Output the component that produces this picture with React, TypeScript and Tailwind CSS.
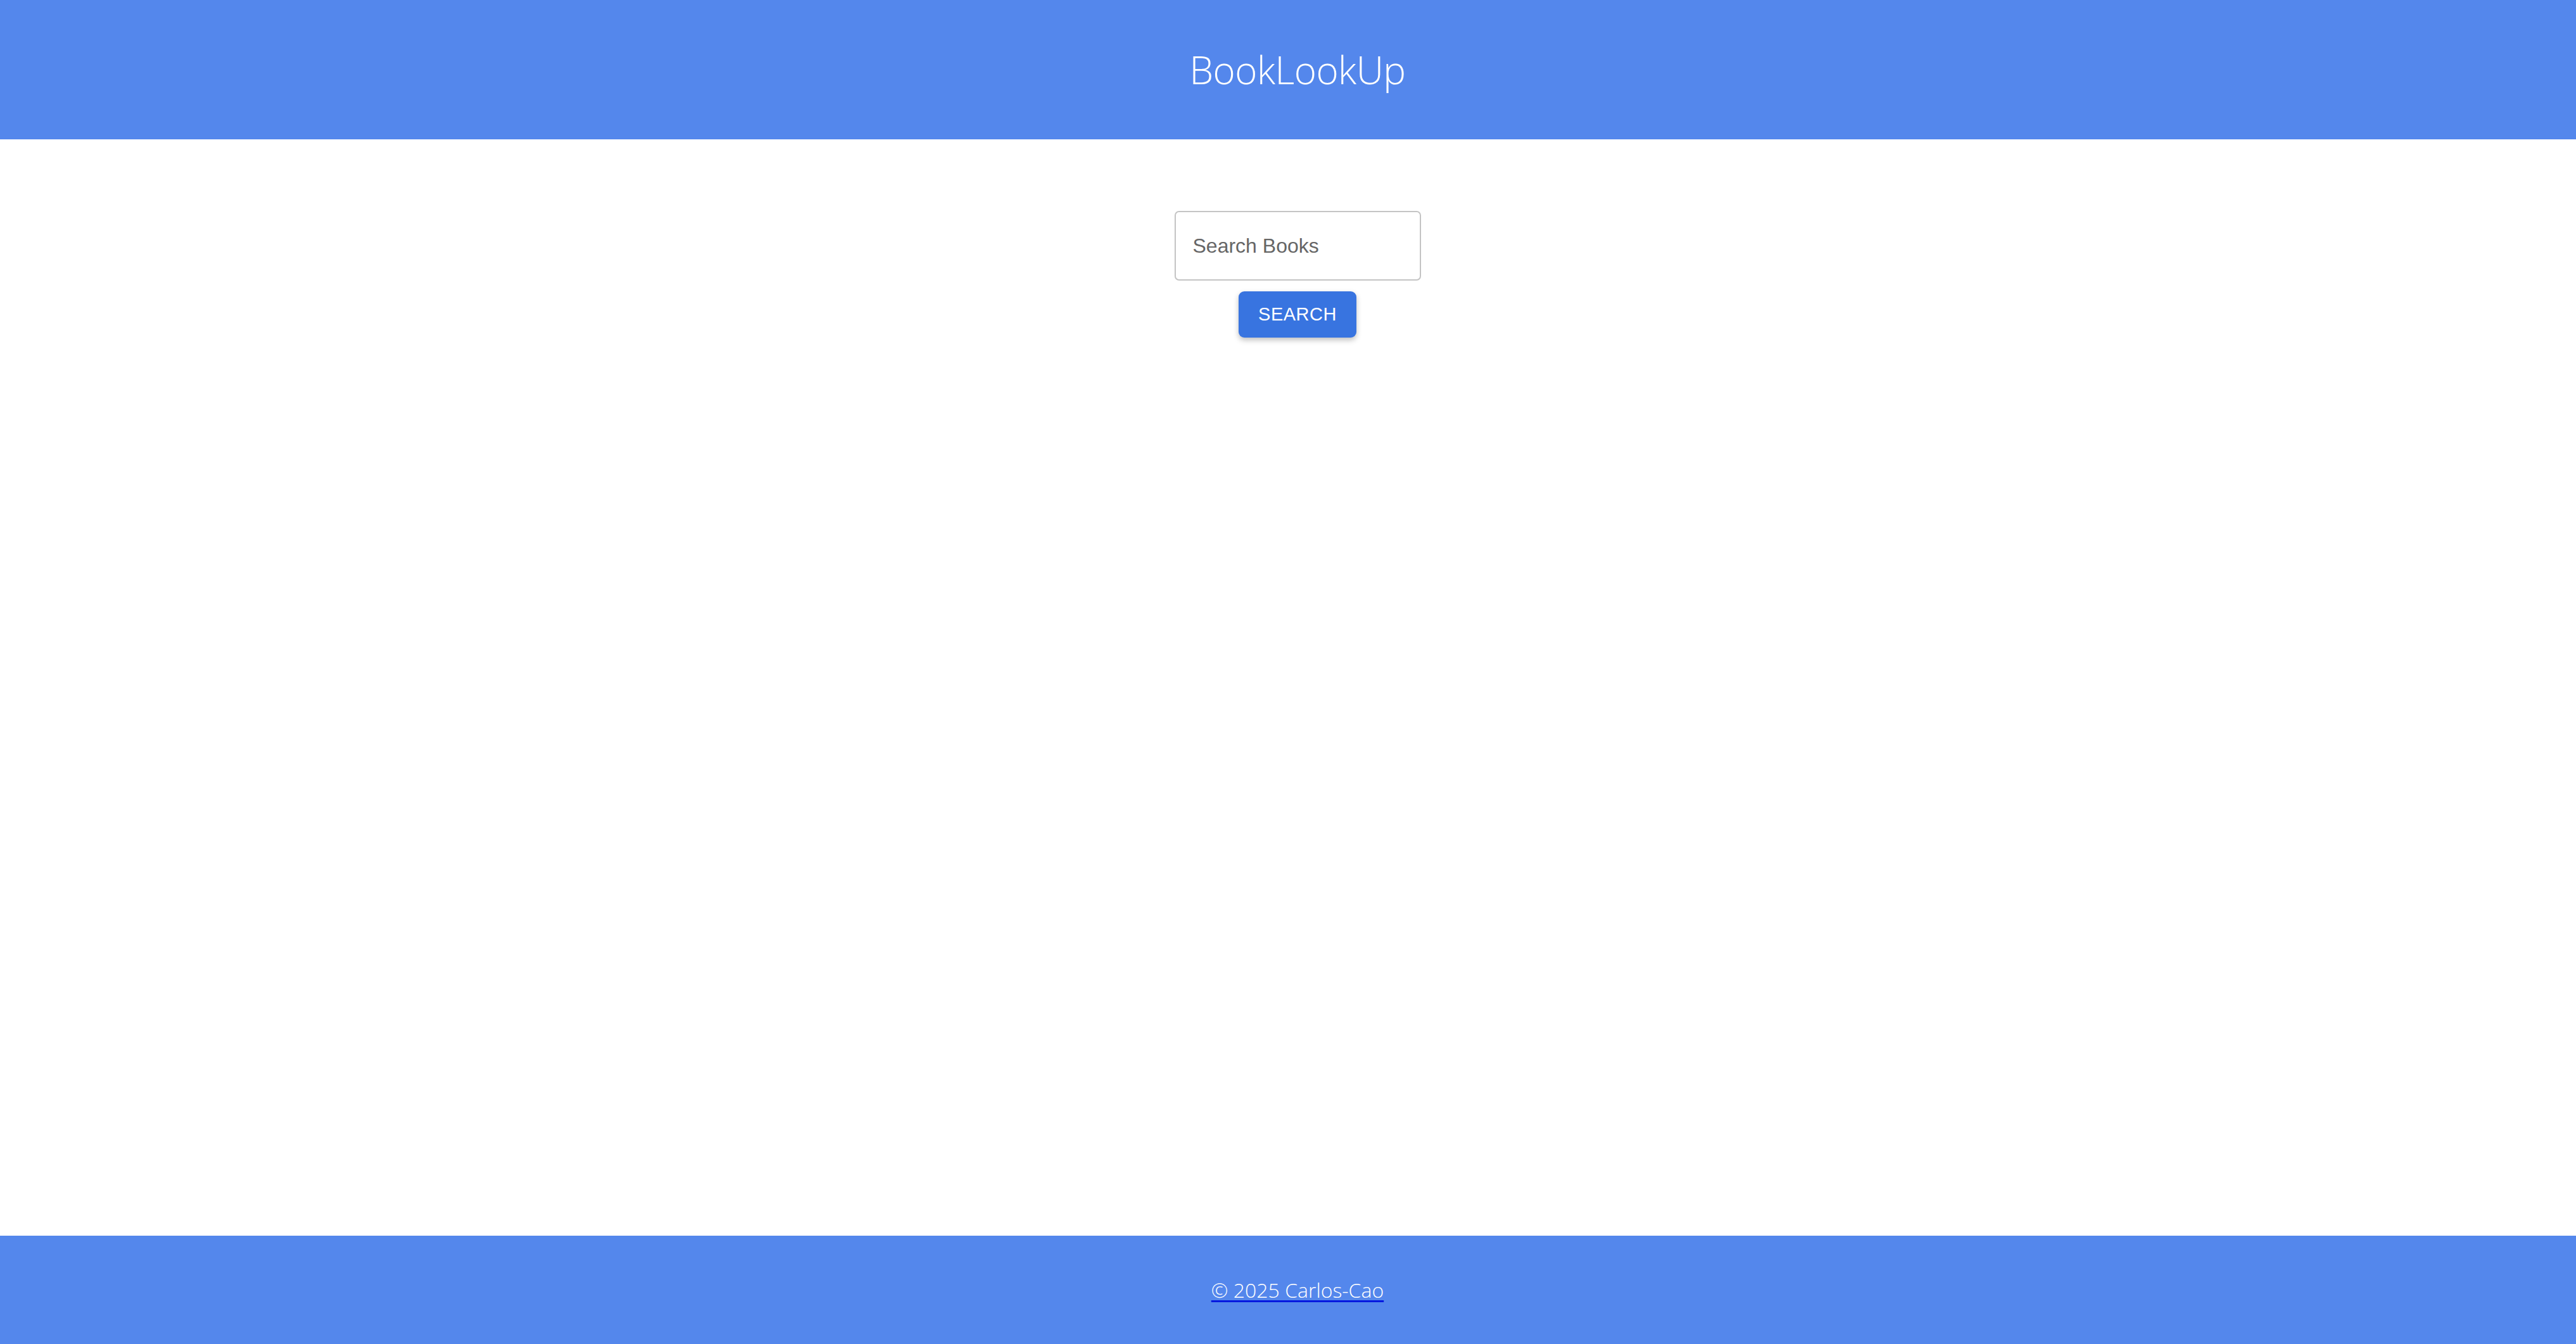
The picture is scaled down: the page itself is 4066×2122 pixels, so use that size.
import React, { useState } from 'react';

export default function App() {
  const [query, setQuery] = useState('');

  return (
    <div className="h-screen overflow-hidden flex flex-col bg-white">
      <header className="h-[220px] shrink-0 bg-[#5487ec] flex items-center justify-center pl-[30px]">
        <h1 className="text-white text-[60px] leading-none font-light font-['Open_Sans',sans-serif] -tracking-[0.5px]">
          BookLookUp
        </h1>
      </header>

      <main className="flex-1 flex flex-col items-center pt-[113px] pl-[30px]">
        <form
          onSubmit={(e) => e.preventDefault()}
          className="flex flex-col items-center gap-[17px]"
        >
          <input
            className="w-[389px] h-[110px] rounded-[7px] border-2 border-[#c4c4c4] px-[27px] text-[32px] text-[#333] placeholder:text-[#666] outline-none font-['Liberation_Sans',sans-serif]"
            placeholder="Search Books"
            value={query}
            onChange={(e) => setQuery(e.target.value)}
          />
          <button
            type="submit"
            className="w-[186px] h-[73px] rounded-[9px] bg-[#3874e0] text-white text-[29px] font-medium tracking-[0.5px] shadow-[0_4px_8px_rgba(0,0,0,0.25)] font-['Liberation_Sans',sans-serif]"
          >
            SEARCH
          </button>
        </form>
      </main>

      <footer className="h-[171px] shrink-0 bg-[#5487ec] flex items-center justify-center pl-[30px]">
        <a
          href="#"
          className="text-white text-[32px] underline decoration-[#0018e0] decoration-[3px] underline-offset-[4px] font-light font-['Open_Sans',sans-serif]"
        >
          © 2025 Carlos-Cao
        </a>
      </footer>
    </div>
  );
}
